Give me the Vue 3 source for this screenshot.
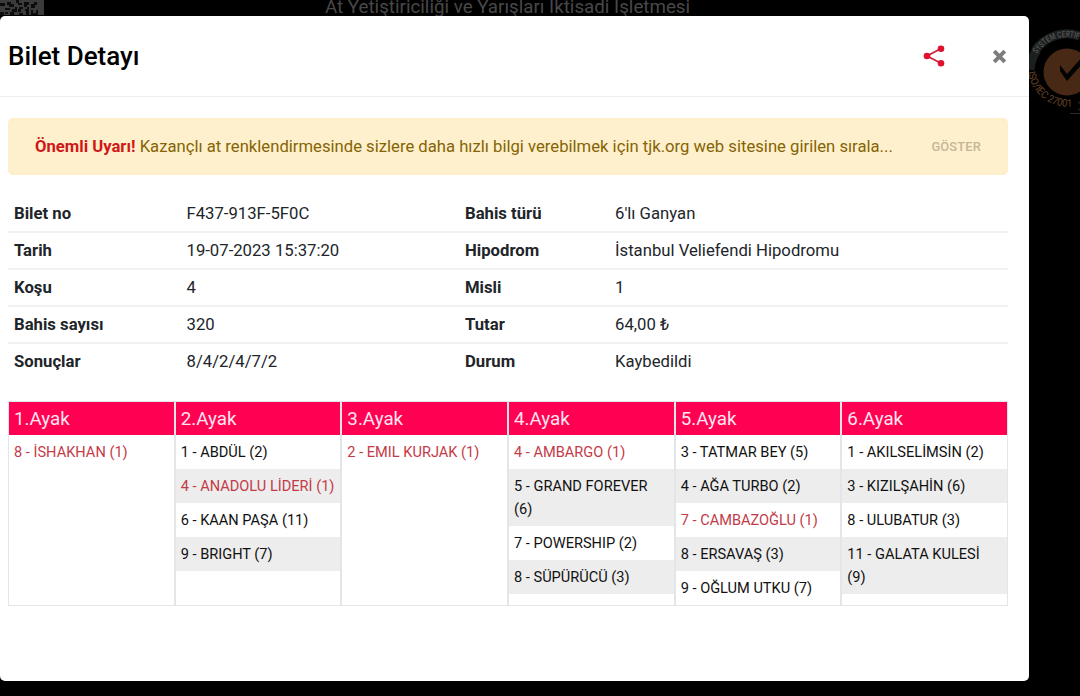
<template>
  <div class="page">
    <div class="backdrop">
      <svg class="qr" width="44" height="15" viewBox="0 0 44 15">
        <rect width="44" height="15" fill="#3b3b3b" />
        <path
          fill="#0c0c0c"
          d="M0 3h5v3h-5zM7 2h4v2h3v3h-5v-2h-2zM16 0h3v3h3v2h-4v-2h-2zM24 2h5v3h-2v2h-3zM31 4h3v-2h3v3h-2v3h-4zM0 12h4v3h-4zM5 8h5v2h-5zM12 9h3v-2h2v5h-3v3h-4v-3h2zM19 7h4v2h-2v3h-3v-3h1zM25 9h2v-2h2v8h-3v-4h-1zM31 10h2v3h3v-3h2v5h-7zM19 13h4v2h-4zM5 12h3v2h-3z"
        />
      </svg>
      <span class="site-name">At Yetiştiriciliği ve Yarışları İktisadi İşletmesi</span>
      <svg class="seal" width="52" height="90" viewBox="1028 26 52 90">
        <path d="M1030 70 A37 37 0 0 1 1037 50" fill="none" stroke="#1c1f1f" stroke-width="9" />
        <path d="M1035 51 A38 38 0 0 1 1080 36.300" fill="none" stroke="#1c1f1f" stroke-width="9" />
        <circle cx="1067" cy="72" r="23.500" fill="#482915" />
        <path d="M1060 65 L1060 71 L1067 81 L1084 62 L1084 55 L1067 74 Z" fill="#030303" />
        <path id="seal-top" d="M1037 54 A34.500 34.500 0 0 1 1099 59" fill="none" />
        <path id="seal-bottom" d="M1028 72 A41 41 0 0 0 1107 80" fill="none" />
        <text class="seal-top-text">
          <textPath href="#seal-top" textLength="48" lengthAdjust="spacingAndGlyphs">SYSTEM CERTIF</textPath>
        </text>
        <text class="seal-bottom-text">
          <textPath href="#seal-bottom" textLength="62" lengthAdjust="spacingAndGlyphs">ISO/IEC 27001</textPath>
        </text>
        <path d="M1070 113.500h10M1079 101v3M1079 108v3" stroke="#292929" />
      </svg>
    </div>

    <div class="modal">
      <div class="modal-header">
        <h5 class="modal-title">Bilet Detayı</h5>
        <button class="icon-btn share" aria-label="Paylaş">
          <svg width="22" height="22" viewBox="0 0 22 22">
            <path d="M18 3.500L4 11l14 7.300" fill="none" stroke="#c9283a" stroke-width="1.800" />
            <circle cx="4" cy="11" r="3.300" fill="#e0102f" />
            <circle cx="18" cy="3.700" r="3.300" fill="#e0102f" />
            <circle cx="18" cy="18.300" r="3.300" fill="#e0102f" />
          </svg>
        </button>
        <button class="icon-btn close" aria-label="Kapat">
          <svg width="15" height="15" viewBox="0 0 15 15">
            <path d="M2.200 2.200l10.600 10.600M12.800 2.200l-10.600 10.600" stroke="#7d7d7d" stroke-width="3.900" />
          </svg>
        </button>
      </div>

      <div class="modal-body">
        <div class="alert">
          <p class="alert-text">
            <b>Önemli Uyarı!</b> Kazançlı at renklendirmesinde sizlere daha hızlı bilgi verebilmek için tjk.org web
            sitesine girilen sırala...
          </p>
          <span class="alert-show">GÖSTER</span>
        </div>

        <div class="info">
          <div v-for="row in info" :key="row[0]" class="info-row">
            <b>{{ row[0] }}</b>
            <span>{{ row[1] }}</span>
            <b>{{ row[2] }}</b>
            <span>{{ row[3] }}</span>
          </div>
        </div>

        <div class="legs">
          <div v-for="(leg, index) in legs" :key="index" class="leg">
            <div class="leg-title">{{ index + 1 }}.Ayak</div>
            <ul class="leg-list">
              <li v-for="horse in leg" :key="horse.name" :class="{ winner: horse.winner }">{{ horse.name }}</li>
            </ul>
          </div>
        </div>
      </div>
    </div>
  </div>
</template>

<script setup>
const info = [
  ['Bilet no', 'F437-913F-5F0C', 'Bahis türü', "6'lı Ganyan"],
  ['Tarih', '19-07-2023 15:37:20', 'Hipodrom', 'İstanbul Veliefendi Hipodromu'],
  ['Koşu', '4', 'Misli', '1'],
  ['Bahis sayısı', '320', 'Tutar', '64,00 ₺'],
  ['Sonuçlar', '8/4/2/4/7/2', 'Durum', 'Kaybedildi'],
]

const legs = [
  [{ name: '8 - İSHAKHAN (1)', winner: true }],
  [
    { name: '1 - ABDÜL (2)' },
    { name: '4 - ANADOLU LİDERİ (1)', winner: true },
    { name: '6 - KAAN PAŞA (11)' },
    { name: '9 - BRIGHT (7)' },
  ],
  [{ name: '2 - EMIL KURJAK (1)', winner: true }],
  [
    { name: '4 - AMBARGO (1)', winner: true },
    { name: '5 - GRAND FOREVER\n(6)' },
    { name: '7 - POWERSHIP (2)' },
    { name: '8 - SÜPÜRÜCÜ (3)' },
  ],
  [
    { name: '3 - TATMAR BEY (5)' },
    { name: '4 - AĞA TURBO (2)' },
    { name: '7 - CAMBAZOĞLU (1)', winner: true },
    { name: '8 - ERSAVAŞ (3)' },
    { name: '9 - OĞLUM UTKU (7)' },
  ],
  [
    { name: '1 - AKILSELİMSİN (2)' },
    { name: '3 - KIZILŞAHİN (6)' },
    { name: '8 - ULUBATUR (3)' },
    { name: '11 - GALATA KULESİ\n(9)' },
  ],
]
</script>

<style>
body {
  background: #000;
}
</style>

<style scoped>
.page {
  position: relative;
  box-sizing: border-box;
  height: 696px;
  padding: 16px 51px 15px 0;
  overflow: hidden;
  background: #000;
  font-family: Roboto, 'Liberation Sans', sans-serif;
  color: #212529;
}

.backdrop {
  position: absolute;
  inset: 0;
}

.qr {
  position: absolute;
  top: 0;
  left: 0;
}

.site-name {
  position: absolute;
  top: -4px;
  left: 325px;
  font-size: 18.75px;
  line-height: 22px;
  color: #484848;
  white-space: nowrap;
}

.seal {
  position: absolute;
  top: 26px;
  left: 1028px;
}

.seal-top-text {
  font-size: 8.5px;
  font-weight: 500;
  fill: #585858;
}

.seal-bottom-text {
  font-size: 10.5px;
  fill: #6a4527;
}

.modal {
  position: relative;
  height: 665px;
  background: #fff;
  border-radius: 5px;
}

.modal-header {
  display: flex;
  align-items: center;
  box-sizing: border-box;
  height: 81px;
  padding: 0 22px 0 8px;
  border-bottom: 1px solid #efefef;
}

.modal-title {
  flex: 1;
  margin: 0;
  font-size: 26px;
  font-weight: 500;
  color: #000;
}

.icon-btn {
  display: flex;
  padding: 0;
  border: none;
  background: none;
  cursor: pointer;
}

.close {
  margin-left: 47px;
}

.modal-body {
  padding: 21px 21px 0 8px;
}

.alert {
  display: flex;
  align-items: center;
  box-sizing: border-box;
  height: 57px;
  padding: 0 26px;
  border: 1px solid #fff0c8;
  border-radius: 5px;
  background: #fff0cd;
}

.alert-text {
  flex: 1;
  margin: 0;
  font-size: 16.67px;
  color: #856404;
  white-space: nowrap;
}

.alert-text b {
  color: #d01717;
}

.alert-show {
  font-size: 12.8px;
  font-weight: 500;
  letter-spacing: 0.2px;
  color: #c5b696;
}

.info {
  margin-top: 21px;
  font-size: 16.7px;
}

.info-row {
  display: grid;
  grid-template-columns: 172.5px 278.5px 150px 1fr;
  align-items: center;
  box-sizing: border-box;
  height: 37px;
  padding-left: 6px;
  border-bottom: 2px solid #f0f1f1;
}

.info-row:last-child {
  border-bottom-color: transparent;
}

.legs {
  display: grid;
  grid-template-columns: repeat(6, 1fr);
  height: 205px;
  margin-top: 20px;
}

.leg {
  border: 1px solid #e3e6e8;
}

.leg-title {
  height: 33px;
  padding-left: 5px;
  background: #ff0053;
  color: #ffe5ee;
  font-size: 18.8px;
  line-height: 34px;
}

.leg-list {
  margin: 0;
  padding: 0;
  list-style: none;
  font-size: 14.6px;
  line-height: 23px;
  color: #111;
}

.leg-list li {
  padding: 6px 5px 5px;
  white-space: pre-line;
}

.leg-list li:nth-child(even) {
  background: #ededed;
}

.leg-list .winner {
  color: #c33b48;
}
</style>
